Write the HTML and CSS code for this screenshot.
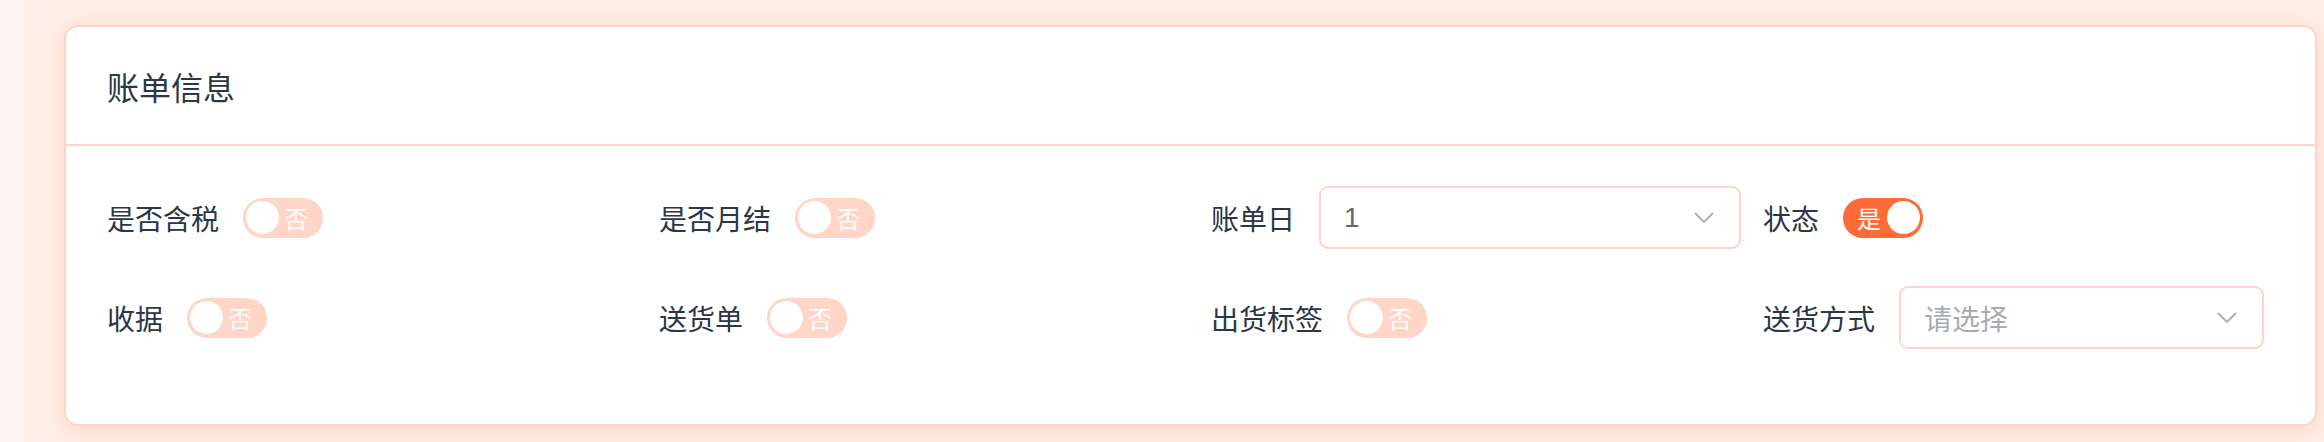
FILE: index.html
```html
<!DOCTYPE html>
<html lang="zh-CN">
<head>
<meta charset="utf-8">
<title>账单信息</title>
<link rel="stylesheet" href="styles.css">
</head>
<body>
<div class="layout">
  <aside class="strip"></aside>
  <main class="main">
    <section class="card">
      <header class="card-header">
        <h2 class="card-title">账单信息</h2>
      </header>
      <div class="card-body">
        <div class="form-grid">
          <div class="form-item">
            <span class="label">是否含税</span>
            <span class="switch off"><span class="knob"></span><span class="sw-text">否</span></span>
          </div>
          <div class="form-item">
            <span class="label">是否月结</span>
            <span class="switch off"><span class="knob"></span><span class="sw-text">否</span></span>
          </div>
          <div class="form-item">
            <span class="label">账单日</span>
            <div class="select select-day">
              <span class="value">1</span>
              <svg class="arrow" viewBox="0 0 20 11" width="20" height="11"><path d="M1 1 L10 10 L19 1" fill="none" stroke="#a9acb3" stroke-width="1.8"/></svg>
            </div>
          </div>
          <div class="form-item">
            <span class="label">状态</span>
            <span class="switch on"><span class="sw-text">是</span><span class="knob"></span></span>
          </div>

          <div class="form-item">
            <span class="label">收据</span>
            <span class="switch off"><span class="knob"></span><span class="sw-text">否</span></span>
          </div>
          <div class="form-item">
            <span class="label">送货单</span>
            <span class="switch off"><span class="knob"></span><span class="sw-text">否</span></span>
          </div>
          <div class="form-item">
            <span class="label">出货标签</span>
            <span class="switch off"><span class="knob"></span><span class="sw-text">否</span></span>
          </div>
          <div class="form-item">
            <span class="label">送货方式</span>
            <div class="select select-ship">
              <span class="placeholder">请选择</span>
              <svg class="arrow" viewBox="0 0 20 11" width="20" height="11"><path d="M1 1 L10 10 L19 1" fill="none" stroke="#a9acb3" stroke-width="1.8"/></svg>
            </div>
          </div>
        </div>
      </div>
    </section>
  </main>
</div>
</body>
</html>
```

FILE: styles.css
```css
* { box-sizing: border-box; }
html, body { margin: 0; padding: 0; }
body {
  width: 2324px;
  height: 442px;
  overflow: hidden;
  font-family: "Noto Sans CJK SC", "Noto Sans", "Liberation Sans", sans-serif;
  background: #ffeee7;
}
.layout {
  display: flex;
  height: 442px;
}
.strip {
  width: 24px;
  flex: none;
  background: #fff5f2;
}
.main {
  flex: 1;
  padding: 25px 7px 0 40px;
  background: #ffeee7;
}
.card {
  width: 2253px;
  height: 401px;
  background: #ffffff;
  border: 2px solid #ffd4c6;
  border-radius: 14px;
  box-shadow: 0 4px 22px rgba(255, 150, 115, 0.28);
  overflow: hidden;
}
.card-header {
  height: 119px;
  border-bottom: 2px solid #ffd4c6;
  display: flex;
  align-items: center;
  padding: 0 41px;
}
.card-title {
  margin: 0;
  font-size: 32px;
  font-weight: 400;
  line-height: 1;
  color: #2d3644;
}
.card-body {
  padding: 40px 41px 0;
}
.form-grid {
  display: grid;
  grid-template-columns: repeat(4, 552px);
  grid-auto-rows: 63px;
  row-gap: 37px;
}
.form-item {
  display: flex;
  align-items: center;
}
.label {
  font-size: 28px;
  line-height: 1;
  color: #2d3644;
  margin-right: 24px;
  white-space: nowrap;
}
.switch {
  width: 80px;
  height: 40px;
  border-radius: 20px;
  display: flex;
  align-items: center;
  justify-content: space-between;
  flex: none;
}
.switch.off {
  background: #ffd5c8;
  padding: 0 15px 0 3px;
}
.switch.on {
  background: #ff6b36;
  padding: 0 3px 0 14px;
}
.knob {
  width: 33px;
  height: 33px;
  border-radius: 50%;
  background: #ffffff;
}
.sw-text {
  font-size: 24px;
  line-height: 1;
  color: #ffffff;
}
.select {
  height: 63px;
  border: 2px solid #ffd4c6;
  border-radius: 9px;
  display: flex;
  align-items: center;
  justify-content: space-between;
  padding: 0 25px 0 23px;
  background: #ffffff;
}
.select-day { width: 422px; }
.select-ship { width: 365px; }
.value {
  font-family: "Liberation Sans", "Noto Sans CJK SC", sans-serif;
  font-size: 28px;
  color: #606770;
}
.placeholder {
  font-size: 28px;
  color: #a8abb2;
}
.arrow { display: block; }
```
